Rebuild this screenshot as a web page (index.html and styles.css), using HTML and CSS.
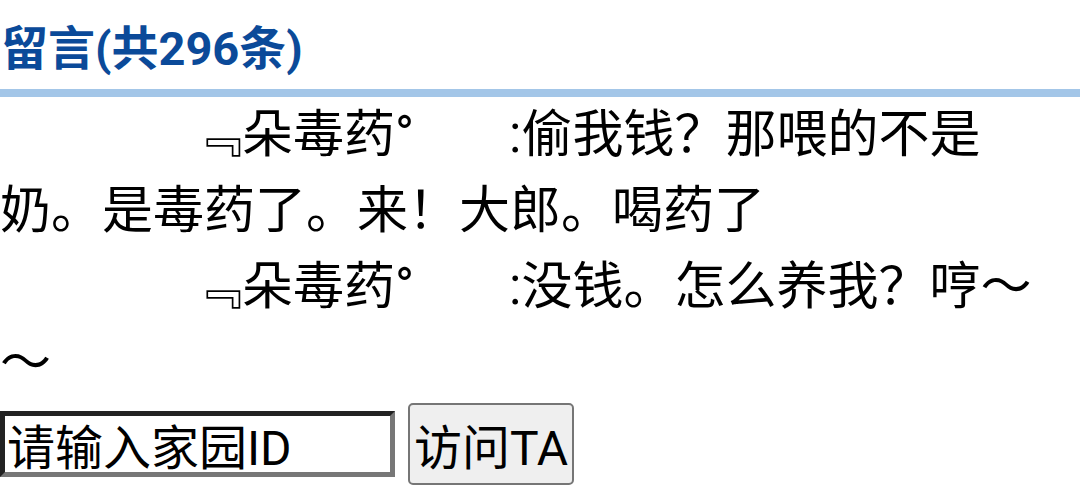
FILE: index.html
```html
<!DOCTYPE html>
<html lang="zh-CN">
<head>
<meta charset="utf-8">
<title>留言</title>
<link rel="stylesheet" href="styles.css">
</head>
<body>
<h2 class="title">留言(共296条)</h2>
<div class="comments">
  <p class="comment"><span class="name">﹃朵毒药°</span><span class="msg">:偷我钱？那喂的不是奶。是毒药了。来！大郎。喝药了</span></p>
  <p class="comment"><span class="name">﹃朵毒药°</span><span class="msg">:没钱。怎么养我？哼～～</span></p>
</div>
<form class="visit">
  <input class="visit-input" type="text" value="请输入家园ID">
  <button class="visit-btn" type="button">访问TA</button>
</form>
</body>
</html>
```
FILE: styles.css
```css
html, body {
  margin: 0;
  padding: 0;
  background: #ffffff;
}
body {
  font-family: Roboto, "Noto Sans CJK SC", sans-serif;
  color: #000;
}
.title {
  margin: 0;
  padding: 10px 1px 2px;
  font-size: 47px;
  line-height: 77px;
  font-weight: bold;
  color: #0b4a99;
  border-bottom: 8px solid #a3c6e8;
}
.comments {
  display: flex;
  flex-direction: column;
}
.comment {
  margin: 0;
  font-size: 51px;
  line-height: 76px;
  text-indent: 191px;
}
.name-deg {
  margin-left: 2px;
}
.msg {
  margin-left: 95px;
}
.visit {
  display: flex;
  align-items: center;
  gap: 13px;
  margin: 0;
  padding-top: 2px;
}
.visit-input {
  width: 395px;
  height: 66px;
  box-sizing: border-box;
  margin: 0;
  padding: 0 2px;
  border-style: solid;
  border-width: 5px;
  border-color: #222 #777 #777 #222;
  font-family: Roboto, "Noto Sans CJK SC", sans-serif;
  font-size: 48px;
  color: #000;
  background: #fff;
}
.visit-btn {
  height: 82px;
  margin: 0;
  padding: 0 4px;
  border: 2.6px solid #767676;
  border-radius: 5px;
  background: #efefef;
  font-family: Roboto, "Noto Sans CJK SC", sans-serif;
  font-size: 48px;
  color: #000;
}
```
